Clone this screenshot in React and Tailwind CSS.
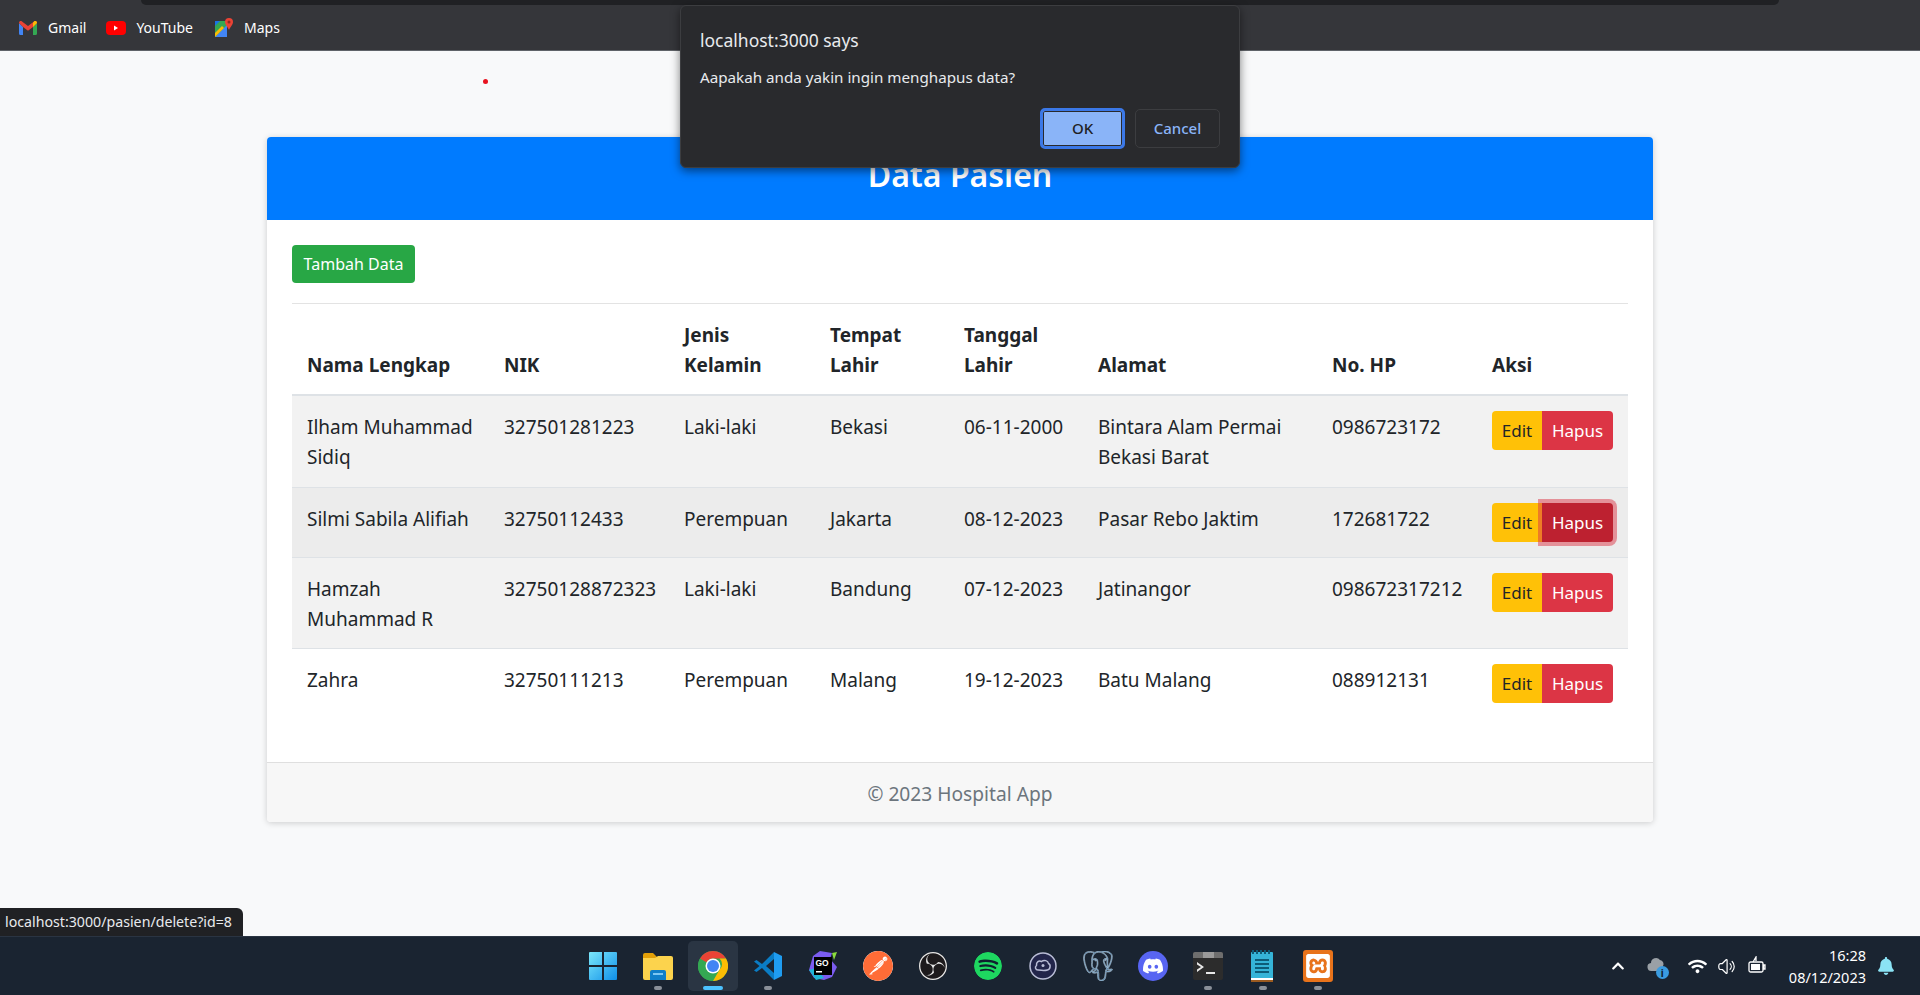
import React from 'react';
import { SiPostman, SiObsstudio, SiSpotify, SiPostgresql, SiDiscord, SiXampp } from 'react-icons/si';
import { FaWifi, FaChevronUp, FaBell } from 'react-icons/fa';
import { HiOutlineSpeakerWave } from 'react-icons/hi2';

const pasien = [
  { nama: 'Ilham Muhammad Sidiq', nik: '327501281223', jk: 'Laki-laki', tempat: 'Bekasi', tgl: '06-11-2000', alamat: 'Bintara Alam Permai Bekasi Barat', hp: '0986723172', h: 'h-[92px]', bg: 'bg-[#f2f2f2]' },
  { nama: 'Silmi Sabila Alifiah', nik: '32750112433', jk: 'Perempuan', tempat: 'Jakarta', tgl: '08-12-2023', alamat: 'Pasar Rebo Jaktim', hp: '172681722', h: 'h-[70px]', bg: 'bg-[#ececec]', focus: true },
  { nama: 'Hamzah Muhammad R', nik: '32750128872323', jk: 'Laki-laki', tempat: 'Bandung', tgl: '07-12-2023', alamat: 'Jatinangor', hp: '098672317212', h: 'h-[91px]', bg: 'bg-[#f2f2f2]' },
  { nama: 'Zahra', nik: '32750111213', jk: 'Perempuan', tempat: 'Malang', tgl: '19-12-2023', alamat: 'Batu Malang', hp: '088912131', h: 'h-[71px]', bg: 'bg-white' },
];

const GmailIcon = () => (
  <svg width="18" height="14" viewBox="0 0 18 14">
    <path d="M0 2v10.5A1.5 1.5 0 0 0 1.5 14H4V6z" fill="#4285f4" />
    <path d="M18 2v10.5a1.5 1.5 0 0 1-1.5 1.5H14V6z" fill="#34a853" />
    <path d="M0 2c0-2 2-2.500 3-1.500L9 5l6-4.500c1-1 3-.5 3 1.500l-4 4-5 3.700L4 6z" fill="#ea4335" />
    <path d="M14 6V1.700L15 .5c1-1 3-.5 3 1.500z" fill="#fbbc04" />
  </svg>
);

const YoutubeIcon = () => (
  <svg width="20" height="14" viewBox="0 0 20 14">
    <rect width="20" height="14" rx="4" fill="#ff0000" />
    <path d="M8 4.500v5l4-2.500z" fill="#fff" />
  </svg>
);

const MapsIcon = () => (
  <svg width="18" height="20" viewBox="0 0 18 20">
    <path d="M0 3h12v16H0z" fill="#34a853" />
    <path d="M0 19 12 7v12z" fill="#4285f4" />
    <path d="M0 19 9 10l-2-2-7 7z" fill="#fbbc04" />
    <path d="M0 3h5L0 8z" fill="#1a73e8" />
    <path d="M14 0a4 4 0 0 1 4 4c0 3-3 5-4 8-1-3-4-5-4-8a4 4 0 0 1 4-4z" fill="#ea4335" />
    <circle cx="14" cy="4" r="1.500" fill="#8f2a20" />
  </svg>
);

const WindowsIcon = () => (
  <svg width="30" height="30" viewBox="0 0 30 30">
    <defs>
      <linearGradient id="win" x1="0" y1="0" x2="1" y2="1">
        <stop offset="0" stopColor="#7ce8fb" />
        <stop offset="1" stopColor="#0f8fe8" />
      </linearGradient>
    </defs>
    <path d="M1 2a1 1 0 0 1 1-1h12v13H1zM16 1h12a1 1 0 0 1 1 1v12H16zM1 16h13v13H2a1 1 0 0 1-1-1zM16 16h13v12a1 1 0 0 1-1 1H16z" fill="url(#win)" />
  </svg>
);

const FolderIcon = () => (
  <svg width="32" height="28" viewBox="0 0 32 28">
    <path d="M1 3a2 2 0 0 1 2-2h8l4 4h14a2 2 0 0 1 2 2v4H1z" fill="#e3a008" />
    <path d="M1 6h12l3-2h13a2 2 0 0 1 2 2v20a2 2 0 0 1-2 2H3a2 2 0 0 1-2-2z" fill="#fcd34d" />
    <path d="M8 20a2 2 0 0 1 2-2h12a2 2 0 0 1 2 2v8H8z" fill="#0f7fc9" />
    <rect x="11" y="21" width="10" height="2" fill="#7cc7f2" />
  </svg>
);

const ChromeIcon = () => (
  <svg width="30" height="30" viewBox="0 0 30 30">
    <circle cx="15" cy="15" r="15" fill="#34a853" />
    <path d="M15 0a15 15 0 0 1 13 7.500H15A7.500 7.500 0 0 0 8.500 11.200L2 7.500A15 15 0 0 1 15 0z" fill="#ea4335" />
    <path d="M2 7.500 8.500 19 15 30A15 15 0 0 1 2 7.500z" fill="#34a853" />
    <path d="M28 7.500A15 15 0 0 1 15 30l6.500-11.200a7.500 7.500 0 0 0 0-11.300z" fill="#fbbc04" />
    <circle cx="15" cy="15" r="7.500" fill="#fff" />
    <circle cx="15" cy="15" r="6" fill="#4285f4" />
  </svg>
);

const VscodeIcon = () => (
  <svg width="30" height="30" viewBox="0 0 30 30">
    <path d="M21 1 29 5v20l-8 4V1z" fill="#1f9cf0" />
    <path d="M21 1 9 13 3.500 9 1 10.500 6.500 15 1 19.500 3.500 21 9 17l12 12 0-7-8-7 8-7z" fill="#0a7cc4" />
  </svg>
);

const GolandIcon = () => (
  <svg width="30" height="30" viewBox="0 0 30 30">
    <path d="M5 5 12 0l12 2-2 6 7 8-5 10-8 3-10-2-5-8z" fill="#7b5cf0" />
    <path d="M1 19 8 29l8-2-8-10z" fill="#1fb6d6" />
    <path d="M24 2 29 1l-3 8z" fill="#8bdc3c" />
    <rect x="6" y="6" width="18" height="18" fill="#000" />
    <text x="7.500" y="14.500" fill="#fff" fontSize="8.500" fontWeight="700" fontFamily="'Liberation Sans', sans-serif">GO</text>
    <rect x="8" y="20" width="6" height="1.500" fill="#fff" />
  </svg>
);

const ObsIcon = () => (
  <span className="flex h-[28px] w-[28px] items-center justify-center rounded-full bg-[#1d1a1c] text-[#e6e6e6]">
    <SiObsstudio size={28} />
  </span>
);

const DevIcon = () => (
  <svg width="28" height="28" viewBox="0 0 28 28">
    <circle cx="14" cy="14" r="13" fill="#22254a" stroke="#b9bdd6" strokeWidth="1.500" />
    <path d="M9 18c-2.500 0-3.500-3-1.500-4.500C7 10 10 8 12.500 9.500 15 7.500 19 8.500 19.500 11.500c2.500 1 2 6-1 6.500-3 1-6 .5-9.500 0z" fill="none" stroke="#b9bdd6" strokeWidth="1.500" />
    <circle cx="14" cy="13.500" r="1.500" fill="#b9bdd6" />
  </svg>
);

const TerminalIcon = () => (
  <svg width="30" height="30" viewBox="0 0 30 30">
    <rect y="1" width="30" height="28" rx="2" fill="#2c2c2c" />
    <path d="M0 3a2 2 0 0 1 2-2h26a2 2 0 0 1 2 2v4H0z" fill="#6e6e6e" />
    <rect x="10" y="1" width="11" height="6" fill="#9a9a9a" />
    <path d="m4 11 7 5-7 5v-2.500l4-2.500-4-2.500z" fill="#e8e8e8" />
    <rect x="13" y="21" width="9" height="2" fill="#e8e8e8" />
  </svg>
);

const NotepadIcon = () => (
  <svg width="24" height="32" viewBox="0 0 24 32">
    <rect y="2" width="22" height="30" rx="1" fill="#35b4d8" />
    <rect y="28" width="22" height="2" fill="#fff" />
    <rect y="30" width="22" height="2" fill="#9a5a20" />
    <path d="M1 0h2v4H1zM5 0h2v4H5zM9 0h2v4H9zM13 0h2v4h-2zM17 0h2v4h-2z" fill="#0d5c78" />
    <path d="M4 9h14v2H4zM4 13h14v2H4zM4 17h14v2H4zM4 21h14v2H4z" fill="#0d5c78" />
  </svg>
);

const BatteryIcon = () => (
  <svg width="20" height="20" viewBox="0 0 20 20" fill="none" stroke="#fff" strokeWidth="1.300">
    <rect x="2" y="6" width="14" height="10" rx="1.500" />
    <rect x="4" y="8" width="9" height="6" fill="#fff" stroke="none" />
    <path d="M16.500 9v4h1.500V9zM6 6l3-5v4" />
  </svg>
);

const CloudIcon = () => (
  <span className="relative flex h-[20px] w-[22px]">
    <svg width="20" height="18" viewBox="0 0 20 18">
      <path d="M5 15a4 4 0 0 1-1-8 5 5 0 0 1 9-3 4 4 0 0 1 3 6v5z" fill="#9aa0a6" />
    </svg>
    <span className="absolute bottom-[-3px] right-0 flex h-[13px] w-[13px] items-center justify-center rounded-full bg-[#3a9be0] text-[10px] font-bold leading-none text-[#10202f]">i</span>
  </span>
);

const taskbarApps = [
  { key: 'windows', icon: <WindowsIcon /> },
  { key: 'folder', icon: <FolderIcon />, dot: true },
  { key: 'chrome', icon: <ChromeIcon />, active: true },
  { key: 'vscode', icon: <VscodeIcon />, dot: true },
  { key: 'goland', icon: <GolandIcon /> },
  { key: 'postman', icon: <SiPostman size={30} className="rounded-full bg-white text-[#ff6c37]" /> },
  { key: 'obs', icon: <ObsIcon /> },
  { key: 'spotify', icon: <SiSpotify size={28} className="rounded-full bg-[#10202f] text-[#1ed760]" /> },
  { key: 'dev', icon: <DevIcon /> },
  { key: 'postgres', icon: <SiPostgresql size={30} stroke="#d8e6f0" strokeWidth={0.4} className="text-[#3f75a3]" /> },
  { key: 'discord', icon: <span className="flex h-[30px] w-[30px] items-center justify-center rounded-full bg-[#5865f2] text-white"><SiDiscord size={20} /></span> },
  { key: 'terminal', icon: <TerminalIcon />, dot: true },
  { key: 'notepad', icon: <NotepadIcon />, dot: true },
  { key: 'xampp', icon: <span className="flex h-[32px] w-[30px] items-center justify-center rounded-[3px] bg-[#e8731b] text-white"><SiXampp size={24} /></span>, dot: true },
];

const App = () => {
  return (
    <div className="relative flex h-screen flex-col overflow-hidden bg-[#f8f9fa] font-['Noto_Sans','Open_Sans',sans-serif] text-[#212529]">
      {/* Browser bookmarks bar */}
      <div className="h-[51px] shrink-0 border-b border-[#5f6368] bg-[#35363a]">
        <div className="mx-[141px] h-[5px] rounded-b-[10px] bg-[#202124]"></div>
        <div className="flex h-[45px] items-center pl-[19px] text-[14px] text-white">
          <GmailIcon />
          <span className="ml-[11px]">Gmail</span>
          <span className="ml-[20px]"><YoutubeIcon /></span>
          <span className="ml-[10px]">YouTube</span>
          <span className="ml-[22px]"><MapsIcon /></span>
          <span className="ml-[11px]">Maps</span>
        </div>
      </div>

      {/* Page */}
      <div className="flex-1 px-[267px] pt-[86px]">
        <div className="overflow-hidden rounded-[4px] bg-white shadow-[0_1px_6px_rgba(0,0,0,0.18)]">
          <div className="flex h-[83px] items-center justify-center bg-[#007bff] pb-[7px] text-[32px] font-semibold text-white">
            Data Pasien
          </div>
          <div className="px-[25px] pb-[43px] pt-[25px]">
            <button className="flex h-[38px] w-[123px] items-center justify-center rounded-[4px] bg-[#28a745] text-[16px] text-white">
              Tambah Data
            </button>
            <div className="mt-[20px] border-t border-[#e3e3e3]"></div>
            <table className="w-full table-fixed border-collapse text-[19px] leading-[30px]">
              <colgroup>
                <col className="w-[197px]" />
                <col className="w-[180px]" />
                <col className="w-[146px]" />
                <col className="w-[134px]" />
                <col className="w-[134px]" />
                <col className="w-[234px]" />
                <col className="w-[160px]" />
                <col className="w-[151px]" />
              </colgroup>
              <thead>
                <tr className="h-[91px] border-b-2 border-[#dee2e6] text-left align-bottom font-bold">
                  <th className="px-[15px] pb-[14px]">Nama Lengkap</th>
                  <th className="px-[15px] pb-[14px]">NIK</th>
                  <th className="px-[15px] pb-[14px]">Jenis Kelamin</th>
                  <th className="px-[15px] pb-[14px]">Tempat Lahir</th>
                  <th className="px-[15px] pb-[14px]">Tanggal Lahir</th>
                  <th className="px-[15px] pb-[14px]">Alamat</th>
                  <th className="px-[15px] pb-[14px]">No. HP</th>
                  <th className="px-[15px] pb-[14px]">Aksi</th>
                </tr>
              </thead>
              <tbody>
                {pasien.map((p) => (
                  <tr key={p.nik} className={`${p.h} ${p.bg} border-b border-[#dee2e6] align-top last:border-b-0`}>
                    <td className="px-[15px] pt-[16px]">{p.nama}</td>
                    <td className="px-[15px] pt-[16px]">{p.nik}</td>
                    <td className="px-[15px] pt-[16px]">{p.jk}</td>
                    <td className="px-[15px] pt-[16px]">{p.tempat}</td>
                    <td className="px-[15px] pt-[16px]">{p.tgl}</td>
                    <td className="px-[15px] pt-[16px]">{p.alamat}</td>
                    <td className="px-[15px] pt-[16px]">{p.hp}</td>
                    <td className="px-[15px] pt-[15px]">
                      <div className="flex h-[39px] w-[122px] text-[17px] leading-none">
                        <button className="flex w-[50px] items-center justify-center rounded-l-[4px] bg-[#ffc107] text-[#212529]">Edit</button>
                        {p.focus ? (
                          <button className="relative flex w-[71px] items-center justify-center rounded-r-[4px] bg-[#bd2130] text-white shadow-[0_0_0_4px_rgba(220,53,69,0.5)]">Hapus</button>
                        ) : (
                          <button className="flex w-[71px] items-center justify-center rounded-r-[4px] bg-[#dc3545] text-white">Hapus</button>
                        )}
                      </div>
                    </td>
                  </tr>
                ))}
              </tbody>
            </table>
          </div>
          <div className="flex h-[60px] items-center justify-center border-t border-[#dfdfdf] bg-[#f7f7f7] pt-[3px] text-[19.200px] text-[#6c757d]">
            © 2023 Hospital App
          </div>
        </div>
      </div>

      {/* Windows taskbar */}
      <div className="grid h-[59px] shrink-0 grid-cols-[1fr_auto_1fr] items-center border-t border-[#2a3442] bg-[#1a2431]">
        <div></div>
        <div className="flex gap-[5px]">
          {taskbarApps.map((app) => (
            <div
              key={app.key}
              className={`relative flex h-[50px] w-[50px] items-center justify-center rounded-[5px] ${app.active ? 'bg-[#2a3543]' : ''}`}
            >
              {app.icon}
              {app.active && <span className="absolute bottom-[1px] h-[4px] w-[20px] rounded-full bg-[#4cc2ff]"></span>}
              {app.dot && <span className="absolute bottom-[1px] h-[4px] w-[8px] rounded-full bg-[#8a9099]"></span>}
            </div>
          ))}
        </div>
        <div className="flex items-center justify-end pr-[25px] text-white">
          <FaChevronUp size={14} />
          <span className="ml-[22px]"><CloudIcon /></span>
          <span className="ml-[19px]"><FaWifi size={19} /></span>
          <span className="ml-[10px]"><HiOutlineSpeakerWave size={19} /></span>
          <span className="ml-[11px]"><BatteryIcon /></span>
          <div className="ml-[22px] text-right text-[14.500px] leading-[22px]">
            <div>16:28</div>
            <div>08/12/2023</div>
          </div>
          <span className="ml-[11px] text-[#8be3f5]"><FaBell size={18} /></span>
        </div>
      </div>

      {/* Stray red dot on the page */}
      <span className="absolute left-[483px] top-[79px] h-[5px] w-[5px] rounded-full bg-[#e8121f]"></span>

      {/* Link status bubble */}
      <div className="absolute bottom-[59px] left-0 flex h-[28px] w-[243px] items-center whitespace-nowrap rounded-tr-[6px] bg-[#202124] pl-[5px] text-[14.200px] text-[#e8eaed]">
        localhost:3000/pasien/delete?id=8
      </div>

      {/* Browser confirm dialog */}
      <div className="absolute left-[680px] top-[5px] h-[163px] w-[560px] rounded-[6px] border border-[#3c3d40] bg-[#292a2d] px-[19px] shadow-[0_3px_10px_rgba(0,0,0,0.5)]">
        <div className="mt-[19px] text-[17.500px] leading-[30px] text-[#e8eaed]">localhost:3000 says</div>
        <div className="mt-[11px] text-[15.200px] leading-[22px] text-[#e8eaed]">Aapakah anda yakin ingin menghapus data?</div>
        <div className="mt-[20px] flex items-center justify-end gap-[10px]">
          <button className="h-[41px] w-[85px] rounded-[5px] border-[3px] border-[#3b78e7] bg-[#8ab4f8] text-[15px] font-medium text-[#202124] shadow-[inset_0_0_0_1px_#292a2d]">OK</button>
          <button className="h-[39px] w-[85px] rounded-[5px] border border-[#3c3d40] text-[15px] font-medium text-[#8ab4f8]">Cancel</button>
        </div>
      </div>
    </div>
  );
};

export default App;
